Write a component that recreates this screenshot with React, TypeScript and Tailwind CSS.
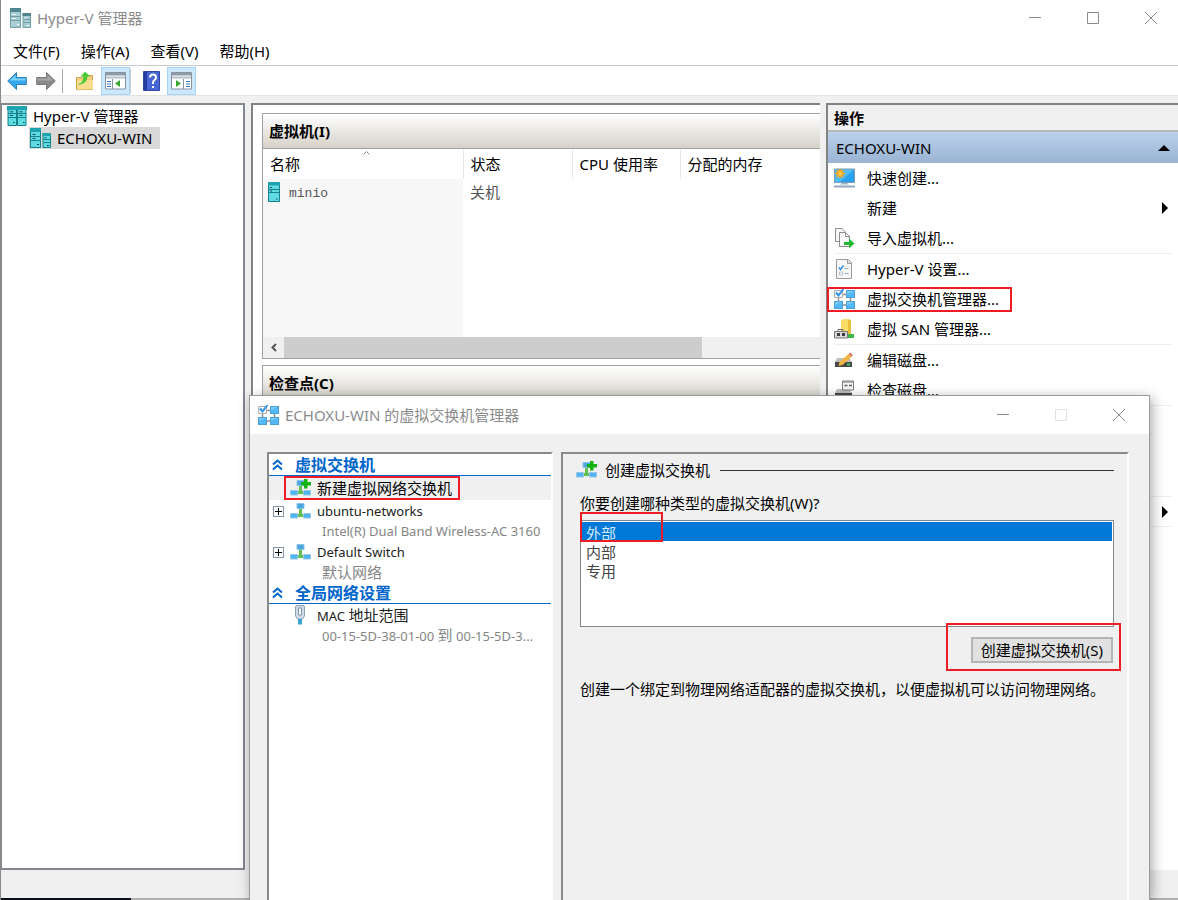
import type { ReactNode } from 'react';

const actionGroups: { label: string; icon?: ReactNode; arrow?: boolean; marked?: boolean }[][] = [
    [
        { label: '快速创建...', icon: <QuickCreateIcon /> },
        { label: '新建', arrow: true },
        { label: '导入虚拟机...', icon: <ImportIcon /> },
    ],
    [
        { label: 'Hyper-V 设置...', icon: <SettingsIcon /> },
        { label: '虚拟交换机管理器...', icon: <SwitchManagerIcon />, marked: true },
        { label: '虚拟 SAN 管理器...', icon: <SanIcon /> },
    ],
    [
        { label: '编辑磁盘...', icon: <EditDiskIcon /> },
        { label: '检查磁盘...', icon: <InspectDiskIcon /> },
    ],
];

function ServerPairIcon({ muted = false }: { muted?: boolean }) {
    const dark = muted ? '#6f9ea5' : '#157f8a';
    const light = muted ? '#a9cdd2' : '#5fdbe4';
    return (
        <svg width="21" height="20" viewBox="0 0 21 20" className="shrink-0">
            <path d="M.5.5h10v19H.5z" fill={light} stroke={dark} />
            <path d="M0 0h11v4H0z" fill={muted ? '#4f858d' : '#1fa3ae'} />
            <path d="M13 5.500h7.500v14H13z" fill={light} stroke={dark} />
            <path d="M12.500 5h8.500v3h-8.500z" fill={muted ? '#4f858d' : '#1fa3ae'} />
            <path d="M1 8.500h9M1 12.500h9M13.500 11.500h7M13.500 14.500h7" stroke={dark} />
            <path d="M2.500 6.500h3M2.500 10.500h3M7 16.500h2M14.500 9.800h2M17 17.500h2" stroke={muted ? '#fff' : '#0b4f57'} />
        </svg>
    );
}

function ServersIcon() {
    return (
        <svg width="20" height="20" viewBox="0 0 20 20" className="shrink-0">
            <path d="M1 3h8.500v16.500H1zM10.500 3H19v16.500h-8.500z" fill="#5fdbe4" stroke="#157f8a" />
            <path d="M0 0h20v4H0z" fill="#1fa3ae" />
            <path d="M1 7.500h18M1 11.500h18" stroke="#157f8a" />
            <path d="M3 5.800h3M3 9.500h3M12.500 5.800h3M12.500 9.500h3M6 16.500h1.500M16 16.500h1.500" stroke="#0b4f57" />
        </svg>
    );
}

function ServerIcon() {
    return (
        <svg width="12" height="20" viewBox="0 0 12 20" className="shrink-0">
            <path d="M.5.5h11v19H.5z" fill="#5fdbe4" stroke="#157f8a" />
            <path d="M0 0h12v3.500H0z" fill="#1fa3ae" />
            <path d="M1 7.500h10M1 10.500h10" stroke="#157f8a" />
            <path d="M2 5.500h2M2 9h2M8 17h1.500" stroke="#0b4f57" />
        </svg>
    );
}

function QuickCreateIcon() {
    return (
        <svg width="21" height="20" viewBox="0 0 21 20">
            <path d="M.5 1h20v13.500H.5z" fill="#4dbcf9" stroke="#7d9bb0" />
            <path d="M20 1.500V14H6z" fill="#2aa2f2" />
            <path d="M8 15h5l2 1.500H6z" fill="#9fb3c4" />
            <path d="M0 18.500h21" stroke="#93a9bd" strokeWidth="2" />
            <path d="M6 0l1.200 2.500L10 1.500 9 4.200 12 5.500 9 6.800l1 2.700-2.800-1L6 11 4.800 8.500 2 9.500l1-2.700L0 5.500l3-1.300-1-2.700 2.800 1z" fill="#f5a623" />
            <circle cx="6" cy="5.500" r="2" fill="#ffc94a" />
        </svg>
    );
}

function ImportIcon() {
    return (
        <svg width="21" height="20" viewBox="0 0 21 20">
            <path d="M1.500.5H8l3 3v10H1.500z" fill="#f7f7f7" stroke="#8d8d8d" />
            <path d="M5.500 4.500h6l4 4v10h-10z" fill="#fafafa" stroke="#8d8d8d" />
            <path d="M11.500 4.500v4h4" fill="none" stroke="#8d8d8d" />
            <path d="M10 14h5v-3.500l5.500 5-5.500 5V17h-5z" fill="#1fb832" />
        </svg>
    );
}

function SettingsIcon() {
    return (
        <svg width="21" height="20" viewBox="0 0 21 20">
            <path d="M2.500.5h12l3 3v16h-15z" fill="#f4f6f8" stroke="#9a9a9a" />
            <path d="M13.500.5v4h4" fill="#ddd" stroke="#9a9a9a" />
            <path d="M5 8.500l1.500 2 3-4" fill="none" stroke="#2f8fe0" strokeWidth="1.500" />
            <path d="M10.500 9.500h4M10.500 14.500h4" stroke="#9db0c0" />
            <path d="M5.500 13h3v3h-3z" fill="none" stroke="#b8c4ce" />
        </svg>
    );
}

function SwitchManagerIcon() {
    return (
        <svg width="21" height="20" viewBox="0 0 21 20" className="shrink-0">
            <path d="M16.500 8v4M4.500 8v4M8 16h5M9 5.500h3" stroke="#909090" strokeWidth="1.500" />
            <path d="M.5 1.500h8v7h-8z" fill="#f2f4f6" stroke="#b0b0b0" />
            <path d="M12 1h9v8h-9zM0 12h9v8H0zM12 12h9v8h-9z" fill="#4a9fd6" />
            <path d="M13 2h7v6h-7zM1 13h7v6H1zM13 13h7v6h-7z" fill="#52b8f7" />
            <path d="M13 2h7l-7 3zM1 13h7l-7 3zM13 13h7l-7 3z" fill="#7dccfb" />
            <path d="M2 3.500l2.500 3L9.500 0" fill="none" stroke="#2f95e8" strokeWidth="2" />
        </svg>
    );
}

function SanIcon() {
    return (
        <svg width="21" height="20" viewBox="0 0 21 20">
            <path d="M7 1q5-2 10 0v13.500H7z" fill="#f9dc66" />
            <path d="M14 .5l3 .5v14h-3z" fill="#ecc03c" />
            <path d="M14 15h6v4h-6z" fill="#3cb54a" />
            <path d="M.5 12.500h13v6.500H.5z" fill="#d8d8d8" stroke="#777" />
            <path d="M4 12v-1.500h5V12" fill="none" stroke="#6a6a6a" />
            <path d="M3 14h3v3H3zM8 14h3v3H8z" fill="#3b3b3b" />
        </svg>
    );
}

function EditDiskIcon() {
    return (
        <svg width="21" height="20" viewBox="0 0 21 20">
            <path d="M3 8h12l3 4H1z" fill="#bdbdbd" />
            <path d="M1 12h17v5H1z" fill="#474747" />
            <path d="M13 14.500h3" stroke="#3fd05a" strokeWidth="2" />
            <path d="M4.500 16l1-4 9-8 3 3-9 8z" fill="#f0b541" />
            <path d="M14.500 4L16 2.500l3 2.500-1.500 2z" fill="#e2786a" />
        </svg>
    );
}

function InspectDiskIcon() {
    return (
        <svg width="21" height="20" viewBox="0 0 21 20">
            <path d="M3 9h12l3 4H1z" fill="#bdbdbd" />
            <path d="M1 13h17v5H1z" fill="#474747" />
            <path d="M8.500 1h11v9h-11z" fill="#f4f4f4" stroke="#7a7a7a" />
            <path d="M8.500 2h11" stroke="#7a7a7a" />
            <path d="M10.500 5.500h3M15 5.500h3" stroke="#666" strokeWidth="1.500" />
        </svg>
    );
}

function NetworkIcon({ plus = false }: { plus?: boolean }) {
    return (
        <svg width="21" height="18" viewBox="0 0 21 18" className="shrink-0">
            <path d="M10.500 6v7M6 13.500h9" stroke="#62bf52" strokeWidth="3" fill="none" />
            <path d="M7 1.500h7v5H7z" fill="#4ba6e0" stroke="#8ac3e8" />
            <path d="M.5 11.500h7v4.500h-7zM13.500 11.500h7v4.500h-7z" fill="#4fb4f4" stroke="#93c6e6" />
            {plus && <path d="M14 0h3.500v3H21v3.500h-3.500v3H14v-3h-3V3h3z" fill="#12b312" />}
        </svg>
    );
}

function AdapterIcon() {
    return (
        <svg width="21" height="20" viewBox="0 0 21 20" className="shrink-0">
            <path d="M5.500 2q0-1.500 1.500-1.500h6q1.500 0 1.500 1.500v9l-2 3h-5l-2-3z" fill="#cfdce8" stroke="#8fa2b5" />
            <path d="M8.500 3h3v7h-3z" fill="#fff" stroke="#7d93a8" />
            <path d="M8 14h4v5.500H8z" fill="#3ba3cf" />
        </svg>
    );
}

function ArrowIcon({ back = false }: { back?: boolean }) {
    return back ? (
        <svg width="20" height="20" viewBox="0 0 20 20">
            <path d="M.7 10L9.500 1.500V6.500H19.300v7H9.500v5z" fill="#35a8ec" stroke="#2f7fb8" />
            <path d="M3 9.500L8.500 4v3.500h10v2z" fill="#7fd0fa" />
        </svg>
    ) : (
        <svg width="20" height="20" viewBox="0 0 20 20">
            <path d="M19.300 10L10.500 1.500V6.500H.7v7h9.800v5z" fill="#8a8a8a" stroke="#777" />
            <path d="M17 9.500L11.500 4v3.500h-10v2z" fill="#a5a5a5" />
        </svg>
    );
}

function FolderUpIcon() {
    return (
        <svg width="20" height="20" viewBox="0 0 20 20">
            <path d="M1.500 6.500h6l2-2h8v14h-16z" fill="#f0d080" stroke="#cda74a" />
            <path d="M2 9h16v9.500H2z" fill="#f8dd90" />
            <path d="M3.500 13q4.500-1 5-7.500H5.500L10 .8 15.500 5.500h-3Q12 13 3.500 14z" fill="#4cc936" />
        </svg>
    );
}

function PaneIcon({ right = false }: { right?: boolean }) {
    return (
        <svg width="21" height="18" viewBox="0 0 21 18">
            <path d="M.5.5h20v16.500H.5z" fill="#fff" stroke="#8793a0" />
            <path d="M1 1h19v2.500H1z" fill="#8d9aa7" />
            <path d="M1 5.500h19" stroke="#b7c1ca" strokeWidth="2" />
            {right ? (
                <>
                    <path d="M12.500 7v10" stroke="#8793a0" />
                    <path d="M15 9.500h4M15 12h4M15 14.500h4" stroke="#3b74b8" />
                    <path d="M5 8v7l5-3.500z" fill="#38a832" />
                </>
            ) : (
                <>
                    <path d="M7.500 7v10" stroke="#8793a0" />
                    <path d="M2 9.500h4M2 12h4M2 14.500h4" stroke="#3b74b8" />
                    <path d="M15 8v7l-5-3.500z" fill="#38a832" />
                </>
            )}
        </svg>
    );
}

function HelpIcon() {
    return (
        <svg width="17" height="20" viewBox="0 0 17 20">
            <path d="M.5.5h16v19H.5z" fill="#4766d6" stroke="#3347a0" />
            <path d="M1 1h3v18H1z" fill="#263c9f" />
            <path d="M7 6.500q0-3 3-3t3 3q0 1.500-1.500 2.500T10 12v1" fill="none" stroke="#fff" strokeWidth="2" />
            <path d="M9 15h2v2H9z" fill="#fff" />
        </svg>
    );
}

function WindowButtons({ maximizable = true }: { maximizable?: boolean }) {
    return (
        <div className="flex shrink-0 text-[#8c8c8c]">
            <button aria-label="最小化" className="flex h-9 w-[58px] items-center justify-center">
                <svg width="12" height="12" stroke="currentColor"><path d="M0 5.500h12" /></svg>
            </button>
            <button aria-label="最大化" disabled={!maximizable} className="flex h-9 w-[58px] items-center justify-center disabled:text-[#e2e2e2]">
                <svg width="12" height="12" fill="none" stroke="currentColor"><path d="M.5.5h11v11H.5z" /></svg>
            </button>
            <button aria-label="关闭" className="flex h-9 w-[58px] items-center justify-center">
                <svg width="12" height="12" stroke="currentColor"><path d="M0 0l12 12M12 0L0 12" /></svg>
            </button>
        </div>
    );
}

function RightArrow() {
    return <svg width="6" height="12"><path d="M0 0l6 6-6 6z" /></svg>;
}

function TreeHeading({ children }: { children: ReactNode }) {
    return (
        <h3 className="flex h-[22px] items-center border-b border-[#0066cc] pl-[3px] text-base font-bold text-[#0066cc]">
            <svg width="11" height="12" viewBox="0 0 11 12" fill="none" stroke="currentColor" strokeWidth="2" className="mr-3">
                <path d="M1 5.500l4.500-4 4.500 4M1 10.500l4.500-4 4.500 4" />
            </svg>
            {children}
        </h3>
    );
}

function TreeEntry({ title, detail, icon, expandable = false }: { title: ReactNode; detail: ReactNode; icon: ReactNode; expandable?: boolean }) {
    return (
        <li>
            <div className="flex h-[22px] items-center gap-1.5 pl-1">
                {expandable ? (
                    <button aria-label="展开" className="flex h-[11px] w-[11px] shrink-0 items-center justify-center border border-[#8496ad] bg-white">
                        <svg width="7" height="7" stroke="#000"><path d="M0 3.500h7M3.500 0v7" /></svg>
                    </button>
                ) : (
                    <span className="w-[11px]" />
                )}
                {icon}
                <span className="text-[#222]">{title}</span>
            </div>
            <div className="h-[19px] pl-[53px] leading-[18px] whitespace-nowrap text-[#858585]">{detail}</div>
        </li>
    );
}

function SwitchDialog() {
    return (
        <section className="absolute top-[395px] right-7 bottom-0 left-[248px] flex flex-col border border-b-0 border-[#9a9a9a] bg-[#f0f0f0] shadow-[2px_3px_12px_rgba(0,0,0,0.35)]">
            <header className="flex h-[38px] items-center justify-between bg-white pr-px pl-2">
                <div className="flex items-center gap-1.5 text-[#8c8c8c]">
                    <SwitchManagerIcon />
                    <h2>ECHOXU-WIN 的虚拟交换机管理器</h2>
                </div>
                <WindowButtons maximizable={false} />
            </header>

            <div className="flex min-h-0 flex-1 gap-2 pt-[18px] pr-5 pl-[17px]">
                <nav className="w-[286px] shrink-0 border-2 border-b-0 border-t-[#8a8a8a] border-r-white border-l-[#8a8a8a] bg-white text-[13px]">
                    <TreeHeading>虚拟交换机</TreeHeading>
                    <div className="relative flex h-6 items-center gap-1.5 bg-[#f0f0f0] pl-[21px] text-[15px]">
                        <NetworkIcon plus />
                        <span>新建虚拟网络交换机</span>
                        <span className="absolute top-0 left-[15px] h-6 w-[176px] border-2 border-[#ed1c24]" />
                    </div>
                    <ul>
                        <TreeEntry title="ubuntu-networks" detail="Intel(R) Dual Band Wireless-AC 3160" icon={<NetworkIcon />} expandable />
                        <TreeEntry title="Default Switch" detail={<span className="text-[15px]">默认网络</span>} icon={<NetworkIcon />} expandable />
                    </ul>
                    <TreeHeading>全局网络设置</TreeHeading>
                    <ul>
                        <TreeEntry
                            title={<>MAC <span className="text-[15px]">地址范围</span></>}
                            detail={<>00-15-5D-38-01-00 <span className="text-[15px]">到</span> 00-15-5D-3...</>}
                            icon={<AdapterIcon />}
                        />
                    </ul>
                </nav>

                <div className="min-w-0 flex-1 border-2 border-b-0 border-t-[#8a8a8a] border-r-white border-l-[#8a8a8a] pr-[13px] pl-[17px]">
                    <div className="-ml-1 flex h-8 items-center gap-2">
                        <NetworkIcon plus />
                        <h3>创建虚拟交换机</h3>
                        <span className="ml-0.5 flex-1 border-t border-[#333]" />
                    </div>
                    <label htmlFor="switch-type" className="flex h-[34px] items-center">你要创建哪种类型的虚拟交换机(W)?</label>
                    <div className="relative">
                        <select
                            id="switch-type"
                            size={5}
                            defaultValue="外部"
                            className="block h-[107px] w-full overflow-hidden border border-[#828790] bg-white p-px text-[#444]"
                        >
                            <option className="h-[19px] min-h-0 bg-linear-to-b from-[#0078d7] to-[#0078d7] px-1 py-0 leading-4 [-webkit-text-fill-color:#d5e9f9]">外部</option>
                            <option className="h-[19px] min-h-0 px-1 py-0 leading-4">内部</option>
                            <option className="h-[19px] min-h-0 px-1 py-0 leading-4">专用</option>
                        </select>
                        <span className="pointer-events-none absolute -top-2 left-0 h-[30px] w-[83px] border-2 border-[#ed1c24]" />
                    </div>
                    <div className="flex justify-end pt-2.5 pr-px">
                        <div className="relative">
                            <button className="flex h-[26px] items-center border-2 border-[#b4b4b4] bg-[#e1e1e1] px-2">创建虚拟交换机(S)</button>
                            <span className="pointer-events-none absolute -top-3.5 -right-2 -bottom-2 -left-[25px] border-2 border-[#ed1c24]" />
                        </div>
                    </div>
                    <p className="mt-4">创建一个绑定到物理网络适配器的虚拟交换机，以便虚拟机可以访问物理网络。</p>
                </div>
            </div>
        </section>
    );
}

function VirtualMachines() {
    return (
        <div className="flex min-w-0 flex-1 flex-col gap-1.5 border-2 border-r-0 border-[#828282] bg-white pt-2 pl-[9px]">
            <section className="border border-r-0 border-[#a0a0a0]">
                <h2 className="flex h-[35px] items-center border-b border-[#a0a0a0] bg-linear-to-b from-white to-[#d6d2c9] px-1.5 font-bold">虚拟机(I)</h2>
                <table className="h-[188px] w-full table-fixed text-left">
                    <thead>
                        <tr className="h-[30px]">
                            <th className="relative w-[200px] border-r border-[#e8e8e8] px-[7px] font-normal">
                                名称
                                <svg width="7" height="4" fill="none" stroke="#888" className="absolute top-0.5 left-1/2"><path d="M.5 3.500l3-3 3 3" /></svg>
                            </th>
                            <th className="w-[109px] border-r border-[#e8e8e8] px-[7px] font-normal">状态</th>
                            <th className="w-[108px] border-r border-[#e8e8e8] px-[7px] font-normal">CPU 使用率</th>
                            <th className="px-[7px] font-normal">分配的内存</th>
                        </tr>
                    </thead>
                    <tbody className="text-[#555]">
                        <tr className="h-[26px]">
                            <td className="bg-[#f7f7f7] px-[5px]">
                                <span className="flex items-center gap-[9px] font-['Liberation_Mono',monospace] text-[13px]">
                                    <ServerIcon />
                                    <span className="pt-1">minio</span>
                                </span>
                            </td>
                            <td className="px-[7px]">关机</td>
                            <td />
                            <td />
                        </tr>
                        <tr>
                            <td className="bg-[#f7f7f7]" />
                            <td colSpan={3} />
                        </tr>
                    </tbody>
                </table>
                <div className="flex h-[21px] bg-[#f0f0f0]">
                    <button aria-label="向左滚动" className="flex w-[21px] items-center justify-center">
                        <svg width="6" height="9" fill="none" stroke="#555" strokeWidth="2"><path d="M5 1L1.500 4.500 5 8" /></svg>
                    </button>
                    <div className="flex-1"><div className="h-full w-[78%] bg-[#cdcdcd]" /></div>
                </div>
            </section>
            <section className="flex-1 border border-r-0 border-[#a0a0a0]">
                <h2 className="flex h-[35px] items-center border-b border-[#a0a0a0] bg-linear-to-b from-white to-[#d6d2c9] px-1.5 font-bold">检查点(C)</h2>
            </section>
        </div>
    );
}

function Actions() {
    return (
        <aside className="w-[352px] shrink-0 border-t-2 border-l-2 border-[#828282] bg-white">
            <h2 className="flex h-[27px] items-center border-b-2 border-[#b8b8b8] bg-[#f0f0f0] px-1.5 font-bold">操作</h2>
            <button className="flex h-[31px] w-full items-center justify-between bg-linear-to-b from-[#b9d1ea] to-[#9ab3d3] px-2">
                ECHOXU-WIN
                <svg width="12" height="6"><path d="M0 6l6-6 6 6z" /></svg>
            </button>
            <div className="px-1.5">
                {actionGroups.map((group) => (
                    <ul key={group[0].label} className="border-b border-[#efefef]">
                        {group.map((action) => (
                            <li key={action.label} className="relative">
                                <button className="flex h-[30px] w-full items-center pr-1">
                                    <span className="w-[33px] shrink-0">{action.icon}</span>
                                    <span className="flex-1 text-left">{action.label}</span>
                                    {action.arrow && <RightArrow />}
                                </button>
                                {action.marked && <span className="pointer-events-none absolute top-[3px] -left-[7px] h-[25px] w-[185px] border-2 border-[#ed1c24]" />}
                            </li>
                        ))}
                    </ul>
                ))}
                <div className="h-[91px] border-b border-[#efefef]" />
                <button aria-label="查看" className="flex h-[30px] w-full items-center justify-end border-b border-[#efefef] pr-1">
                    <RightArrow />
                </button>
            </div>
        </aside>
    );
}

export default function App() {
    return (
        <main className="relative flex h-screen flex-col overflow-hidden border-l border-[#8a8a8a] bg-[#f0f0f0] font-['Noto_Sans','Noto_Sans_CJK_SC',sans-serif] text-[15px] leading-5 text-black">
            <header className="-mr-0.5 flex h-9 items-center justify-between bg-white pl-[9px]">
                <div className="flex items-center gap-1.5 text-[#8c8c8c]">
                    <ServerPairIcon muted />
                    <h1>Hyper-V 管理器</h1>
                </div>
                <WindowButtons />
            </header>

            <nav className="flex h-[30px] items-center gap-[21px] border-b border-[#c8cacd] bg-white px-3">
                <button>文件(F)</button>
                <button>操作(A)</button>
                <button>查看(V)</button>
                <button>帮助(H)</button>
            </nav>

            <div className="flex h-[30px] shrink-0 items-center border-b border-[#e3e3e3] bg-white pl-1.5">
                <button aria-label="后退" className="mr-[9px]"><ArrowIcon back /></button>
                <button aria-label="前进" className="mr-1.5"><ArrowIcon /></button>
                <span className="mr-3 h-6 border-l border-[#a8a8a8]" />
                <button aria-label="上移" className="mr-1.5"><FolderUpIcon /></button>
                <button aria-label="显示/隐藏控制台树" className="flex h-7 w-[29px] items-center justify-center border border-[#a9d3f5] bg-[#cce8ff]"><PaneIcon /></button>
                <span className="mr-3 h-6 border-l border-[#c8c8c8]" />
                <button aria-label="帮助" className="mr-[7px]"><HelpIcon /></button>
                <button aria-label="显示/隐藏操作窗格" className="flex h-7 w-[29px] items-center justify-center border border-[#a9d3f5] bg-[#cce8ff]"><PaneIcon right /></button>
            </div>

            <div className="flex min-h-0 flex-1 gap-1.5 pt-[7px]">
                <nav className="w-[244px] shrink-0 border-2 border-l border-[#828790] bg-white px-[5px]">
                    <div className="flex h-[22px] items-center gap-1.5">
                        <ServersIcon />
                        Hyper-V 管理器
                    </div>
                    <div className="ml-[22px] flex h-[22px] w-fit items-center gap-1.5 bg-[#d9d9d9] pr-2 pl-px">
                        <ServerPairIcon />
                        ECHOXU-WIN
                    </div>
                </nav>
                <VirtualMachines />
                <Actions />
            </div>

            <footer className="h-7 shrink-0" />
            <div className="h-0.5 shrink-0 bg-[#b0b0b0]"><div className="h-full w-[130px] bg-[#0c0f1a]" /></div>

            <SwitchDialog />
        </main>
    );
}
